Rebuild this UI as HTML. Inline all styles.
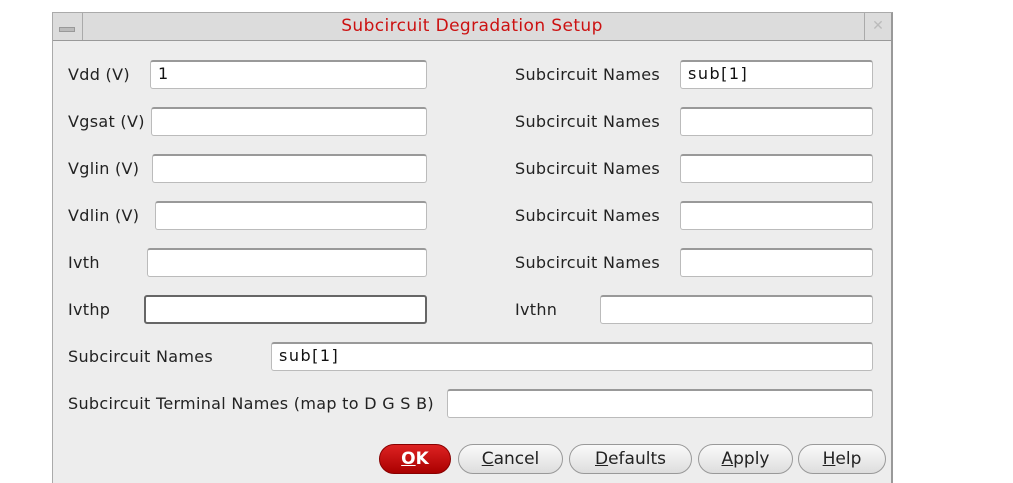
<!DOCTYPE html>
<html><head><style>
body{margin:0;width:1013px;height:482px;background:#fff;position:relative;overflow:hidden;font-family:"DejaVu Sans","Liberation Sans",sans-serif;}
.win{position:absolute;left:52px;top:12px;width:838px;height:470px;background:#ededed;border-left:1px solid #aaa;border-right:2px solid #999;border-top:1px solid #aaa;}
.tb{position:absolute;left:0;top:0;width:838px;height:27px;background:#dcdcdc;border-bottom:1px solid #999;}
.title{position:absolute;left:0;width:838px;top:3px;text-align:center;color:#cc1111;font-size:17px;letter-spacing:0.4px;}
.mb{position:absolute;left:0;top:0;width:29px;height:27px;border-right:1px solid #aaa;}
.mb:after{content:"";position:absolute;left:6px;top:14px;width:14px;height:3px;background:#bbb;border:1px solid #999;}
.xb{position:absolute;right:0;top:0;width:26px;height:27px;border-left:1px solid #aaa;color:#bbb;font-size:14px;text-align:center;line-height:27px;}
.l{position:absolute;font-size:16px;letter-spacing:0.3px;color:#222;}
.f{position:absolute;height:29px;background:#fff;border:1px solid #bbb;border-top:2px solid #999;border-radius:3px;box-sizing:border-box;font-size:16px;padding:2px 0 0 7px;letter-spacing:1.5px;color:#111;}
.b{position:absolute;top:444px;height:30px;border:1px solid #999;border-radius:15px;background:linear-gradient(#fafafa,#ddd);box-sizing:border-box;text-align:center;font-size:17px;line-height:28px;color:#222;}
</style></head><body>
<div class="win"><div class="tb"><div class="mb"></div><div class="title">Subcircuit Degradation Setup</div><div class="xb">✕</div></div></div>
<div class="l" style="left:68px;top:65px">Vdd (V)</div><div class="f" style="left:150px;top:60px;width:277px">1</div>
<div class="l" style="left:68px;top:112px">Vgsat (V)</div><div class="f" style="left:151px;top:107px;width:276px"></div>
<div class="l" style="left:68px;top:159px">Vglin (V)</div><div class="f" style="left:152px;top:154px;width:275px"></div>
<div class="l" style="left:68px;top:206px">Vdlin (V)</div><div class="f" style="left:155px;top:201px;width:272px"></div>
<div class="l" style="left:68px;top:253px">Ivth</div><div class="f" style="left:147px;top:248px;width:280px"></div>
<div class="l" style="left:68px;top:300px">Ivthp</div><div class="f" style="left:144px;top:295px;width:283px;border:2px solid #666"></div>
<div class="l" style="left:515px;top:65px">Subcircuit Names</div><div class="f" style="left:680px;top:60px;width:193px">sub[1]</div>
<div class="l" style="left:515px;top:112px">Subcircuit Names</div><div class="f" style="left:680px;top:107px;width:193px"></div>
<div class="l" style="left:515px;top:159px">Subcircuit Names</div><div class="f" style="left:680px;top:154px;width:193px"></div>
<div class="l" style="left:515px;top:206px">Subcircuit Names</div><div class="f" style="left:680px;top:201px;width:193px"></div>
<div class="l" style="left:515px;top:253px">Subcircuit Names</div><div class="f" style="left:680px;top:248px;width:193px"></div>
<div class="l" style="left:515px;top:300px">Ivthn</div><div class="f" style="left:600px;top:295px;width:273px"></div>
<div class="l" style="left:68px;top:347px">Subcircuit Names</div><div class="f" style="left:271px;top:342px;width:602px">sub[1]</div>
<div class="l" style="left:68px;top:394px">Subcircuit Terminal Names (map to D G S B)</div><div class="f" style="left:447px;top:389px;width:426px"></div>
<div class="b" style="left:379px;width:72px;background:linear-gradient(#d22,#a00);border-color:#800;color:#fff;font-weight:bold"><u>O</u>K</div>
<div class="b" style="left:458px;width:105px"><u>C</u>ancel</div>
<div class="b" style="left:569px;width:123px"><u>D</u>efaults</div>
<div class="b" style="left:698px;width:95px"><u>A</u>pply</div>
<div class="b" style="left:798px;width:88px"><u>H</u>elp</div>
</body></html>
